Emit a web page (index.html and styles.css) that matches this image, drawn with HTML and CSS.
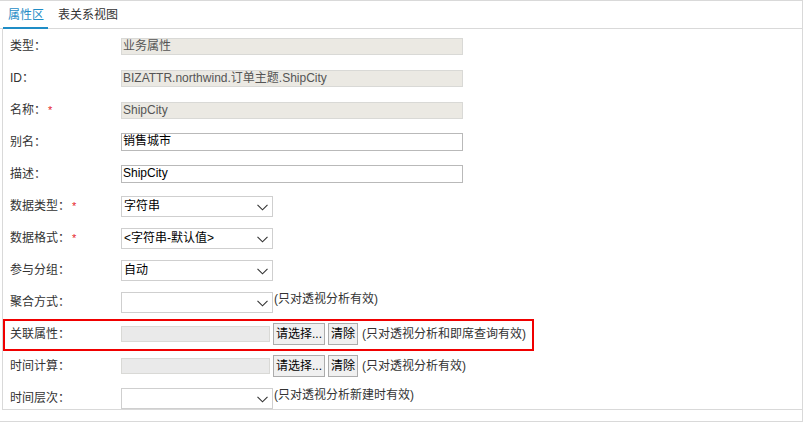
FILE: index.html
```html
<!DOCTYPE html>
<html>
<head>
<meta charset="utf-8">
<link rel="stylesheet" href="styles.css">
</head>
<body>
<div class="wrap">
  <div class="tabs">
    <span class="tab active">属性区</span>
    <span class="tab">表关系视图</span>
  </div>
  <div class="panel">
    <div class="row"><span class="label">类型：</span><span class="ro wide">业务属性</span></div>
    <div class="row"><span class="label">ID：</span><span class="ro wide">BIZATTR.northwind.订单主题.ShipCity</span></div>
    <div class="row"><span class="label">名称：<i class="req">*</i></span><span class="ro wide">ShipCity</span></div>
    <div class="row"><span class="label">别名：</span><span class="txt wide">销售城市</span></div>
    <div class="row"><span class="label">描述：</span><span class="txt wide">ShipCity</span></div>
    <div class="row"><span class="label">数据类型：<i class="req">*</i></span><span class="sel">字符串<svg class="chev" width="11" height="7" viewBox="0 0 11 7"><path d="M0.5 0.8 L5.5 5.8 L10.5 0.8" fill="none" stroke="#333" stroke-width="1.1"/></svg></span></div>
    <div class="row"><span class="label">数据格式：<i class="req">*</i></span><span class="sel">&lt;字符串-默认值&gt;<svg class="chev" width="11" height="7" viewBox="0 0 11 7"><path d="M0.5 0.8 L5.5 5.8 L10.5 0.8" fill="none" stroke="#333" stroke-width="1.1"/></svg></span></div>
    <div class="row"><span class="label">参与分组：</span><span class="sel">自动<svg class="chev" width="11" height="7" viewBox="0 0 11 7"><path d="M0.5 0.8 L5.5 5.8 L10.5 0.8" fill="none" stroke="#333" stroke-width="1.1"/></svg></span></div>
    <div class="row"><span class="label">聚合方式：</span><span class="sel"><svg class="chev" width="11" height="7" viewBox="0 0 11 7"><path d="M0.5 0.8 L5.5 5.8 L10.5 0.8" fill="none" stroke="#333" stroke-width="1.1"/></svg></span><span class="note tight">(只对透视分析有效)</span></div>
    <div class="row"><span class="label">关联属性：</span><span class="ro short"></span><span class="btn">请选择...</span><span class="btn">清除</span><span class="note">(只对透视分析和即席查询有效)</span></div>
    <div class="row"><span class="label">时间计算：</span><span class="ro short"></span><span class="btn">请选择...</span><span class="btn">清除</span><span class="note">(只对透视分析有效)</span></div>
    <div class="row"><span class="label">时间层次：</span><span class="sel"><svg class="chev" width="11" height="7" viewBox="0 0 11 7"><path d="M0.5 0.8 L5.5 5.8 L10.5 0.8" fill="none" stroke="#333" stroke-width="1.1"/></svg></span><span class="note tight">(只对透视分析新建时有效)</span></div>
  </div>
  <div class="mark"></div>
</div>
</body>
</html>
```
FILE: styles.css
```css
* { box-sizing: border-box; }
html, body { margin: 0; padding: 0; background: #fff; }
body {
  font-family: "Liberation Sans", "Noto Sans CJK SC", sans-serif;
  font-size: 12px;
  color: #333;
}
.wrap {
  position: relative;
  width: 803px;
  height: 422px;
  border-top: 1px solid #d9d9d9;
  border-right: 1px solid #d9d9d9;
  border-bottom: 1px solid #d9d9d9;
}
.tabs {
  display: flex;
  gap: 5px;
  height: 28px;
  padding-left: 3px;
  border-bottom: 1px solid #d9d9d9;
}
.tab {
  display: flex;
  align-items: center;
  padding: 0 4px 0 5px;
  height: 28px;
  line-height: 14px;
  color: #333;
}
.tab.active {
  color: #1f8dc6;
  border-bottom: 2px solid #1f8dc6;
  padding-top: 2px;
}
.panel {
  margin-left: 2px;
  height: 381px;
  border-left: 1px solid #d9d9d9;
  border-bottom: 1px solid #d9d9d9;
  padding-left: 7px;
  padding-top: 1px;
  overflow: hidden;
}
.row {
  display: flex;
  align-items: center;
  height: 32px;
}
.label {
  width: 111px;
  flex: none;
  line-height: 14px;
  color: #333;
}
.req {
  font-style: normal;
  color: #e5232b;
  margin-left: 2px;
  font-size: 11px;
}
.ro, .txt {
  display: block;
  height: 17px;
  line-height: 15px;
  padding-left: 1px;
  white-space: nowrap;
}
.wide { width: 342px; }
.ro {
  background: #ebe9e3;
  border: 1px solid #d9d9d6;
  color: #555;
}
.txt {
  background: #fff;
  border: 1px solid #b9b9b9;
  color: #000;
  height: 18px;
}
.short { width: 149px; background: #eaeaea; height: 16px; }
.sel {
  position: relative;
  display: flex;
  align-items: center;
  width: 152px;
  height: 21px;
  border: 1px solid #cfcfcf;
  padding-left: 2px;
  color: #000;
  line-height: 14px;
}
.chev {
  position: absolute;
  right: 4px;
  top: 7px;
}
.btn {
  display: flex;
  align-items: center;
  justify-content: center;
  height: 22px;
  margin-left: 3px;
  padding: 0 2px;
  background: #f0f0f0;
  border: 1px solid #acacac;
  color: #000;
  line-height: 14px;
}
.btn + .btn { margin-left: 3px; }
.note {
  margin-left: 4px;
  line-height: 14px;
  color: #333;
  white-space: nowrap;
}
.note.tight { margin-left: 1px; margin-top: -6px; }
.mark {
  position: absolute;
  left: 3px;
  top: 318px;
  width: 531px;
  height: 32px;
  border: 2px solid #f00000;
}
```
